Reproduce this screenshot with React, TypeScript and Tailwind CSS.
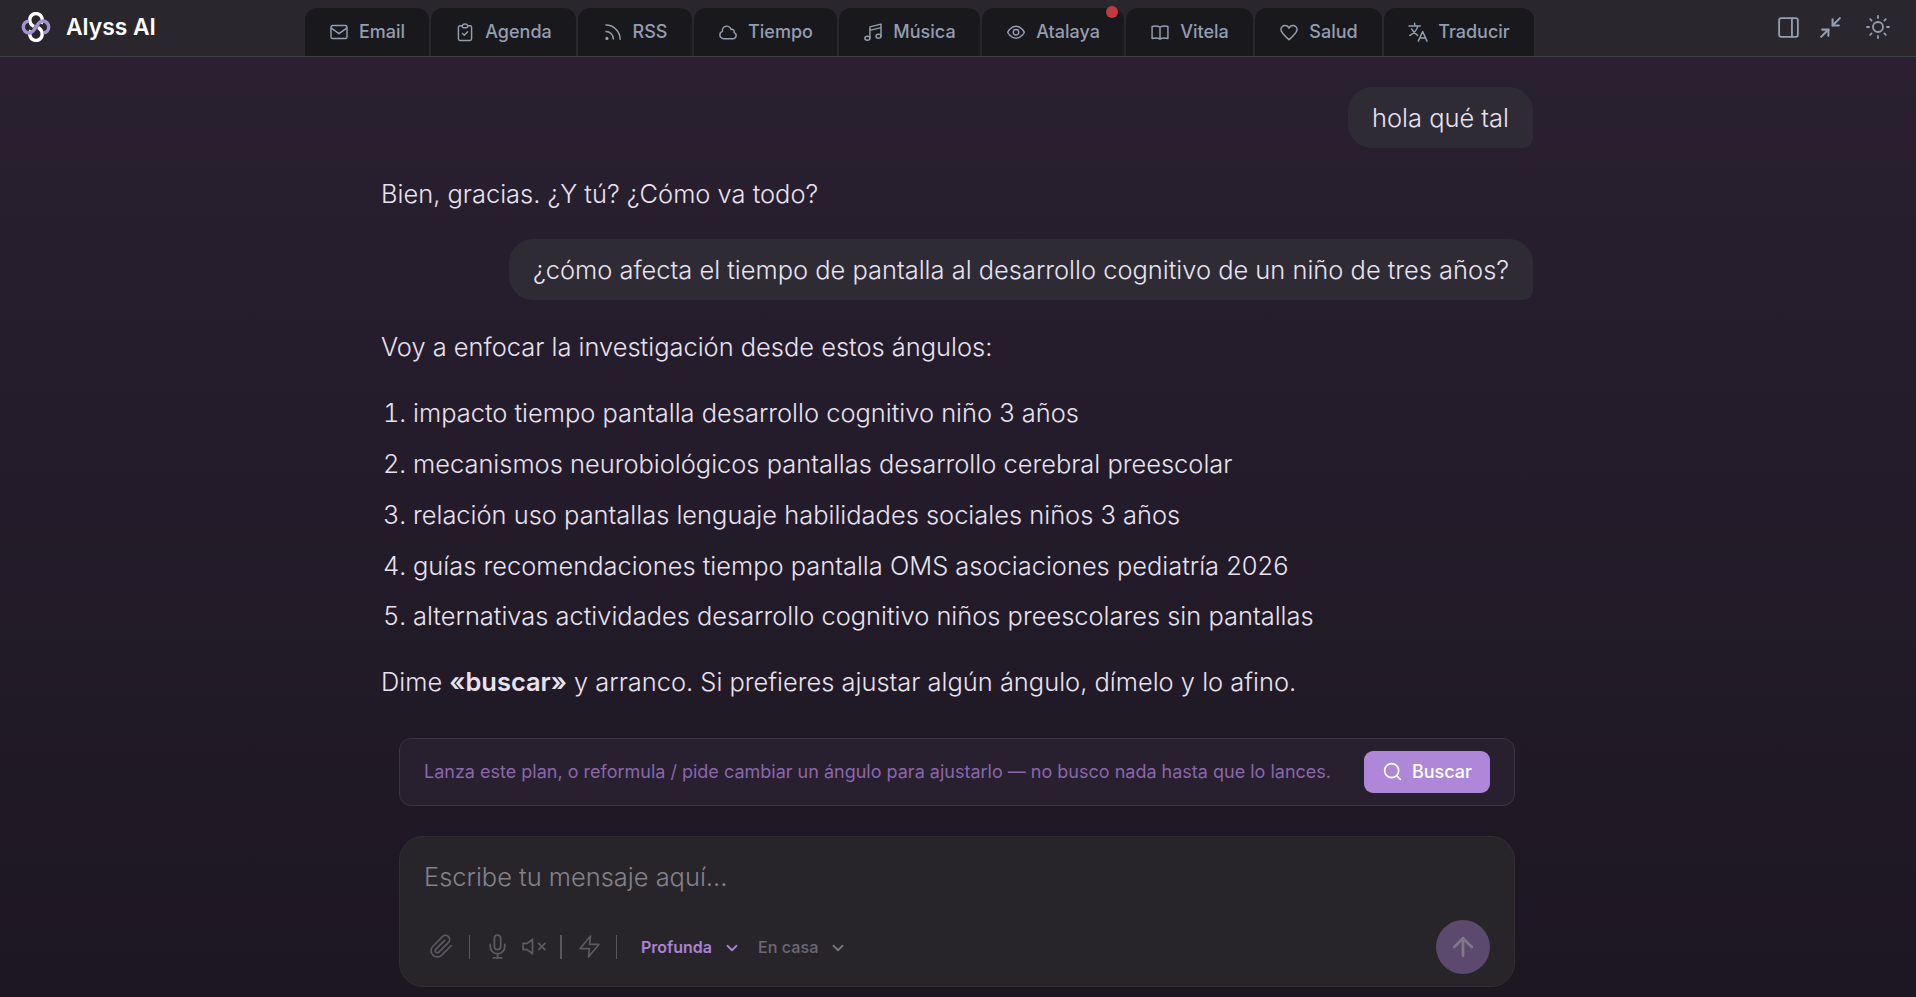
import type { ReactNode } from "react"
import { FiArrowUp, FiChevronDown, FiMic, FiMinimize2, FiPaperclip, FiSearch, FiSun, FiVolumeX, FiZap } from "react-icons/fi"

const Svg = ({ size = 20, width = 1.75, className = "", children }: { size?: number; width?: number; className?: string; children: ReactNode }) => (
    <svg
        width={size}
        height={size}
        viewBox="0 0 24 24"
        fill="none"
        stroke="currentColor"
        strokeWidth={width}
        strokeLinecap="round"
        strokeLinejoin="round"
        className={`shrink-0 ${className}`}
    >
        {children}
    </svg>
)

const tabs: { label: string; width: string; icon: ReactNode; alert?: boolean }[] = [
    { label: "Email", width: "w-[124px]", icon: <><rect x="2.4" y="4.3" width="19.2" height="15.6" rx="2" /><path d="m2.8 7.300 9.200 6.700 9.200-6.700" /></> },
    { label: "Agenda", width: "w-[145px]", icon: <><path d="M8.800 4.500H6A1.900 1.900 0 0 0 4.100 6.400v13.800A1.900 1.900 0 0 0 6 22.100h12a1.900 1.900 0 0 0 1.900-1.900V6.400A1.900 1.900 0 0 0 18 4.500h-2.800" /><path d="M8.800 4.500C9.300 1.800 14.700 1.800 15.200 4.500v.8a1.500 1.500 0 0 1-1.500 1.500h-3.400a1.500 1.500 0 0 1-1.500-1.500z" /><path d="m9 13.800 2.200 2.200 4-4.200" /></> },
    { label: "RSS", width: "w-[114px]", icon: <><path d="M3.500 11.500a9 9 0 0 1 9 9" /><path d="M3.500 3.700a17 17 0 0 1 17 17" /><circle cx="4.700" cy="19.700" r="1.100" fill="currentColor" /></> },
    { label: "Tiempo", width: "w-[143px]", icon: <path d="M2.250 15.500a4.500 4.500 0 0 0 4.500 4.500H18a3.750 3.750 0 0 0 1.332-7.257 3 3 0 0 0-3.758-3.848 5.250 5.250 0 0 0-10.233 2.330A4.502 4.502 0 0 0 2.250 15.500Z" /> },
    { label: "Música", width: "w-[141px]", icon: <><path d="M8.300 19V5.800l13.300-3.300v14.300M8.300 10l13.300-3.300" /><ellipse cx="5.300" cy="19.400" rx="3" ry="2.400" /><ellipse cx="18.600" cy="17" rx="3" ry="2.400" /></> },
    { label: "Atalaya", width: "w-[142px]", alert: true, icon: <><path d="M2 12.300s3.500-7.300 10-7.300 10 7.300 10 7.300-3.500 7.300-10 7.300-10-7.300-10-7.300Z" /><circle cx="12" cy="12.300" r="3.300" /></> },
    { label: "Vitela", width: "w-[127px]", icon: <path d="M12 6.300c-2.500-1.600-6-1.800-9.500-1v14.500c3.500-.8 7-.8 9.500.6 2.500-1.400 6-1.400 9.500-.6V5.300c-3.500-.8-7-.6-9.500 1Zm0 0v14" /> },
    { label: "Salud", width: "w-[127px]", icon: <path d="M21.700 9c0-2.600-2.200-4.700-4.900-4.700-2.100 0-4 1.200-4.800 3-.8-1.800-2.700-3-4.800-3C4.500 4.300 2.300 6.400 2.300 9c0 3.700 4.200 7.400 9.700 12.300C17.500 16.400 21.700 12.700 21.700 9Z" /> },
    { label: "Traducir", width: "w-[150px]", icon: <><path d="M1.200 4.800h13.600M8 1.600v3.200M11.800 5c-1.200 4.600-4.600 8.600-9.600 11.200M4.300 8.300c1.700 3.200 4.200 5.900 7.300 7.800" /><path d="m12.400 23 5.200-11.600L22.800 23M14.200 19.300h6.800" /></> },
]

const angles = [
    "impacto tiempo pantalla desarrollo cognitivo niño 3 años",
    "mecanismos neurobiológicos pantallas desarrollo cerebral preescolar",
    "relación uso pantallas lenguaje habilidades sociales niños 3 años",
    "guías recomendaciones tiempo pantalla OMS asociaciones pediatría 2026",
    "alternativas actividades desarrollo cognitivo niños preescolares sin pantallas",
]

const Logo = () => (
    <svg width="30" height="30" viewBox="0 0 30 30" fill="none" strokeWidth="3.4" className="shrink-0">
        <path d="M13 14.600C10.500 13.200 8.800 11 8.800 8A6.200 6.200 0 1 1 20 11.400" stroke="#fff" />
        <path d="M17 15.400C19.500 16.800 21.200 19 21.200 22A6.200 6.200 0 1 1 10 18.600" stroke="#fff" />
        <path d="M7.600 9.200C4.500 9.400 2.300 11.800 2.300 15s2.600 6 5.900 6c3 0 4.800-2.500 6.800-6s3.800-6 6.800-6c3.300 0 5.900 2.800 5.900 6s-2.200 5.600-5.300 5.800" stroke="#a593cf" />
    </svg>
)

const Header = () => (
    <header className="flex h-[57px] shrink-0 border-b border-[#403e45] bg-[#29272d]">
        <div className="flex w-[305px] items-center gap-[15px] pb-0.5 pl-[21px]">
            <Logo />
            <span className="text-[22.800px] font-semibold text-white">Alyss AI</span>
        </div>
        <nav className="flex gap-0.5 pt-2">
            {tabs.map((tab) => (
                <div key={tab.label} className={`relative flex h-12 items-center justify-center gap-2.5 rounded-t-[12px] bg-[#19181c] text-lg font-medium text-[#949eb0] ${tab.width}`}>
                    <Svg>{tab.icon}</Svg>
                    {tab.label}
                    {tab.alert && <span className="absolute right-1.5 -top-0.5 size-3 rounded-full bg-[#bf3b40]" />}
                </div>
            ))}
        </nav>
        <div className="ml-auto flex items-center pr-[26px] pb-0.5 text-[#949eb0]">
            <Svg size={25} className="mr-[17px]"><rect x="3" y="3" width="18" height="18" rx="2" /><path d="M15.300 3v18" /></Svg>
            <FiMinimize2 size={25} strokeWidth={2} className="mr-[23px]" />
            <FiSun size={24} strokeWidth={1.8} />
        </div>
    </header>
)

const UserMessage = ({ children }: { children: ReactNode }) => (
    <div className="flex h-[61.400px] items-center self-end rounded-[24px] rounded-br-[10px] bg-[#2e2b35] px-6">{children}</div>
)

const PlanBar = () => (
    <div className="mx-[18px] mt-[37px] flex h-[68px] items-center justify-between rounded-[12px] border border-[#3c3245] bg-[#281f2f] px-6">
        <span className="text-lg font-normal text-[#8a67ab]">
            Lanza este plan, o reformula / pide cambiar un ángulo para ajustarlo — no busco nada hasta que lo lances.
        </span>
        <button className="flex h-[42px] w-[126px] items-center justify-center gap-[9px] rounded-[9px] bg-[#ae87d8] text-lg font-medium text-white">
            <FiSearch size={21} strokeWidth={1.8} />
            Buscar
        </button>
    </div>
)

const Composer = () => (
    <div className="mx-[18px] mt-[30px] flex h-[151px] flex-col justify-between rounded-[24px] border border-[#302d35] bg-[#27252a] px-6 pt-5 pb-3">
        <div className="h-10 leading-10 text-[#85828b]">Escribe tu mensaje aquí...</div>
        <div className="flex h-[54px] items-center text-[#5b5962]">
            <FiPaperclip size={25} strokeWidth={1.6} className="ml-[5px]" />
            <span className="ml-[15px] h-6 w-px bg-[#58565f]" />
            <FiMic size={25} strokeWidth={1.7} className="ml-[14.5px]" />
            <FiVolumeX size={25} strokeWidth={1.7} className="ml-[11px]" />
            <span className="ml-[14.5px] h-6 w-0.5 bg-[#58565f]" />
            <FiZap size={25} strokeWidth={1.6} className="ml-[14.5px]" />
            <span className="ml-[14.5px] h-6 w-px bg-[#58565f]" />
            <span className="ml-6 text-base font-semibold text-[#a983d5]">Profunda</span>
            <FiChevronDown size={18} strokeWidth={2.4} className="mt-0.5 ml-[11px] text-[#a983d5]" />
            <span className="ml-[17px] text-[16.200px] font-medium text-[#6c6974]">En casa</span>
            <FiChevronDown size={18} strokeWidth={2.4} className="mt-0.5 ml-[11px] text-[#77747e]" />
            <button className="ml-auto flex size-[54px] items-center justify-center rounded-full bg-[#5b4a6d] text-[#81778b]">
                <FiArrowUp size={30} strokeWidth={2.2} />
            </button>
        </div>
    </div>
)

const App = () => (
    <div className="flex h-[997px] w-full flex-col overflow-hidden bg-linear-to-b from-[#2a2031] to-[#1d1722] pr-0.5 font-['Inter',sans-serif]">
        <div className="-mr-0.5">
            <Header />
        </div>
        <main className="mx-auto flex w-[1152px] flex-col pt-[30px] text-[25.440px] leading-[38px] font-light text-[#e8e2ee]">
            <UserMessage>hola qué tal</UserMessage>
            <p className="mt-[26.600px]">Bien, gracias. ¿Y tú? ¿Cómo va todo?</p>
            <div className="mt-[26px] flex flex-col">
                <UserMessage>¿cómo afecta el tiempo de pantalla al desarrollo cognitivo de un niño de tres años?</UserMessage>
            </div>
            <p className="mt-[27.600px]">Voy a enfocar la investigación desde estos ángulos:</p>
            <ol className="mt-[28.300px] flex list-decimal flex-col gap-[12.750px] pl-8">
                {angles.map((angle) => <li key={angle}>{angle}</li>)}
            </ol>
            <p className="mt-[27.700px]">Dime <strong className="font-semibold">«buscar»</strong> y arranco. Si prefieres ajustar algún ángulo, dímelo y lo afino.</p>
            <PlanBar />
            <Composer />
        </main>
    </div>
)

export default App
